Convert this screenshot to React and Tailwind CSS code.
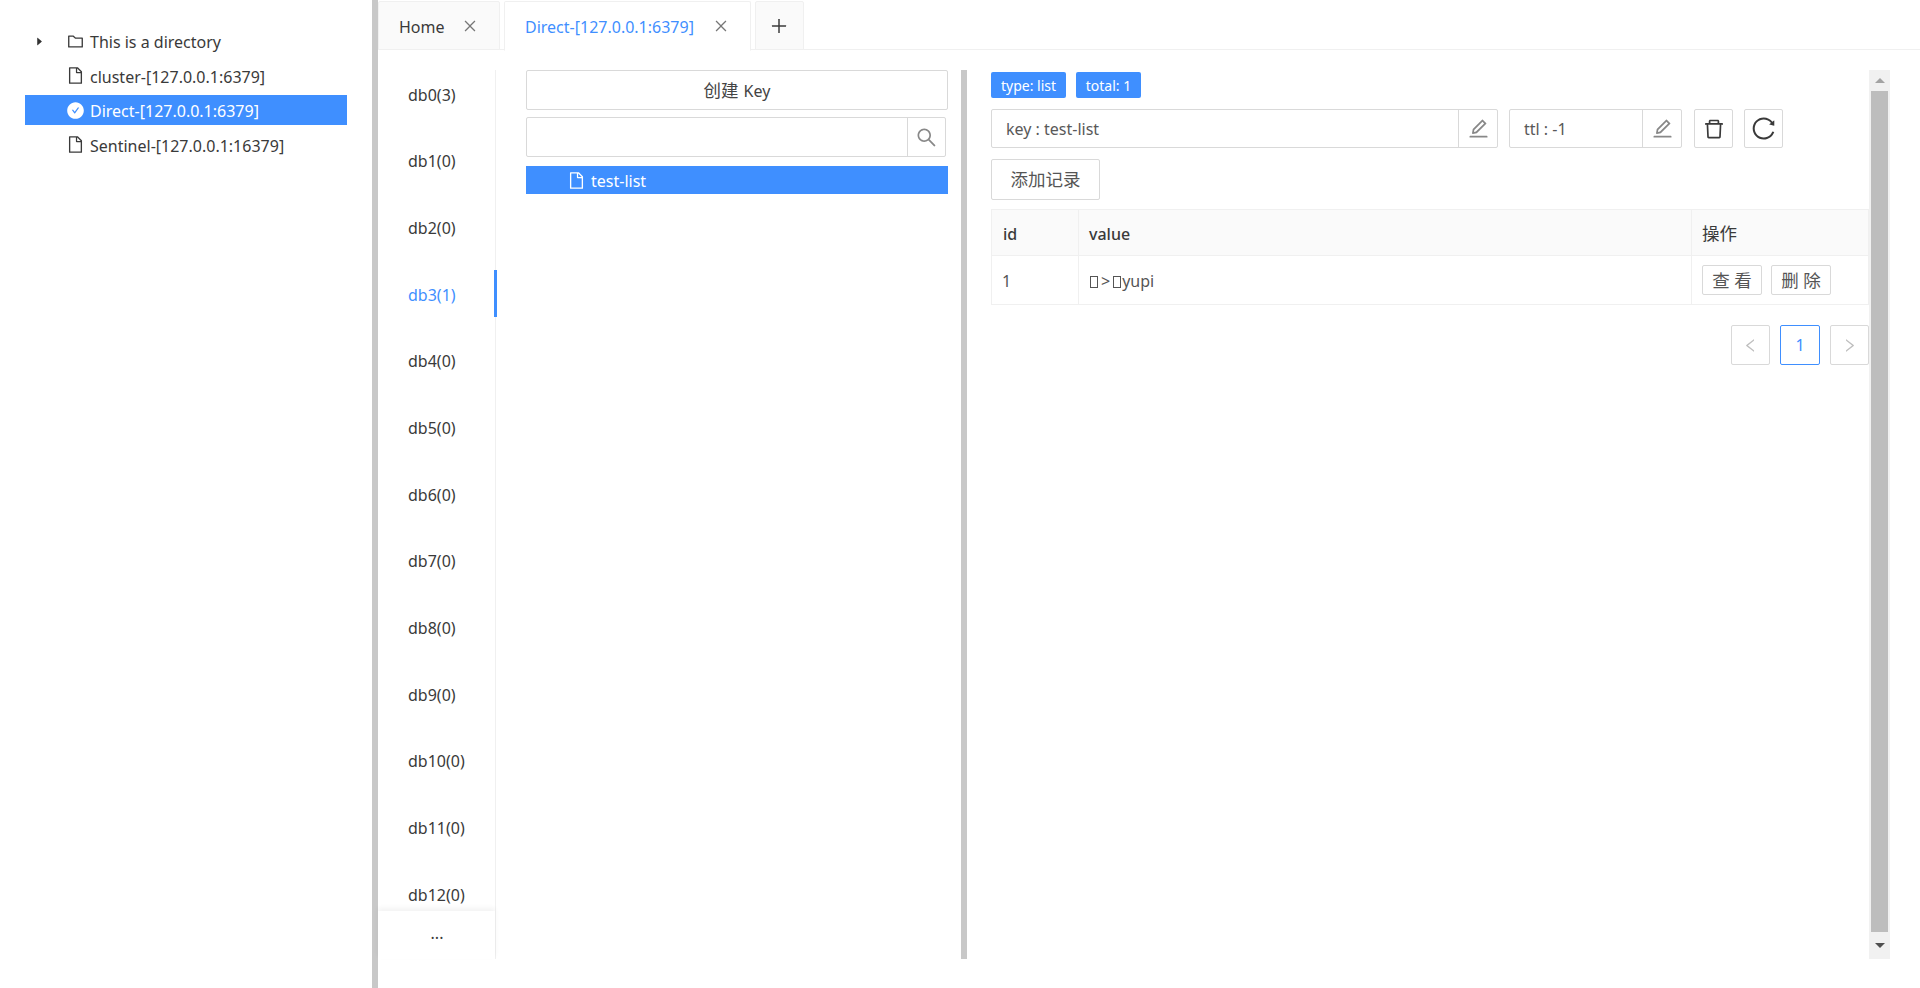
import {
  AiFillCaretRight,
  AiFillCheckCircle,
  AiOutlineClose,
  AiOutlineDelete,
  AiOutlineEdit,
  AiOutlineFile,
  AiOutlineFolder,
  AiOutlineLeft,
  AiOutlinePlus,
  AiOutlineReload,
  AiOutlineRight,
  AiOutlineSearch,
} from "react-icons/ai";

const DATABASES = [3, 0, 0, 1, 0, 0, 0, 0, 0, 0, 0, 0, 0];

function TreeRow({ icon, label, selected, caret }) {
  return (
    <div
      className={`flex h-[30px] w-[322px] items-center ${
        selected ? "bg-[#3f8fff] text-white" : ""
      }`}
    >
      <span className="flex w-[39px] justify-start pl-[9px]">
        {caret && <AiFillCaretRight className="text-[11px] text-[#333]" />}
      </span>
      <span className="flex w-[22px] justify-center text-[19px]">{icon}</span>
      <span className="ml-[4px] mt-[2px] whitespace-nowrap">{label}</span>
    </div>
  );
}

function Tab({ label, active }) {
  return (
    <div
      className={`flex h-[49px] items-center rounded-t-[2px] border border-[#f0f0f0] ${
        active
          ? "relative z-10 mb-[-1px] h-[50px] w-[247px] border-b-white bg-white pl-[20px] text-[#3f8fff]"
          : "w-[122px] bg-[#fafafa] pl-[20px]"
      }`}
    >
      <span className="mt-[2px] whitespace-nowrap">{label}</span>
      <AiOutlineClose
        className={`text-[16px] text-[#777] ${active ? "ml-[19px]" : "ml-[17px]"}`}
      />
    </div>
  );
}

function InputGroup({ width, label }) {
  return (
    <div
      className={`flex h-[39px] items-stretch rounded-[2px] border border-[#d9d9d9] ${width}`}
    >
      <div className="flex flex-1 items-center pl-[14px] text-[#595959]">{label}</div>
      <div className="flex w-[39px] items-center justify-center border-l border-[#d9d9d9] text-[#888]">
        <AiOutlineEdit className="text-[23px]" />
      </div>
    </div>
  );
}

function PageButton({ children, active }) {
  return (
    <div
      className={`flex h-[40px] items-center justify-center rounded-[2px] border ${
        active ? "w-[40px] border-[#3f8fff] text-[#3f8fff]" : "w-[39px] border-[#d9d9d9] text-[#bfbfbf]"
      }`}
    >
      {children}
    </div>
  );
}

// the value holds bytes the font has no glyph for, shown as empty boxes
function MissingGlyph() {
  return <span className="inline-block h-[12px] w-[8px] border border-[#555] align-[-1px]" />;
}

export default function App() {
  return (
    <div className="flex h-[988px] w-[1920px] overflow-hidden bg-white font-['Noto_Sans','Noto_Sans_CJK_SC',sans-serif] text-[16px] text-[#3a3a3a]">
      {/* Connection tree */}
      <aside className="flex w-[372px] shrink-0 flex-col gap-[4.5px] pl-[25px] pt-[26px]">
        <TreeRow caret icon={<AiOutlineFolder />} label="This is a directory" />
        <TreeRow icon={<AiOutlineFile />} label="cluster-[127.0.0.1:6379]" />
        <TreeRow selected icon={<AiFillCheckCircle />} label="Direct-[127.0.0.1:6379]" />
        <TreeRow icon={<AiOutlineFile />} label="Sentinel-[127.0.0.1:16379]" />
      </aside>
      <div className="w-[6px] shrink-0 bg-[#c8c8c8]" />

      <main className="flex min-w-0 flex-1 flex-col">
        {/* Tabs */}
        <div className="flex h-[50px] shrink-0 gap-[4px] border-b border-[#f0f0f0] pr-[30px] pt-[1px]">
          <Tab label="Home" />
          <Tab active label="Direct-[127.0.0.1:6379]" />
          <div className="flex h-[49px] w-[49px] items-center justify-center rounded-t-[2px] border border-[#f0f0f0] bg-[#fafafa] pr-[2px]">
            <AiOutlinePlus className="text-[20px]" />
          </div>
        </div>

        <div className="flex min-h-0 flex-1 pb-[29px] pr-[30px] pt-[20px]">
          {/* Database menu */}
          <nav className="flex w-[118px] shrink-0 flex-col border-r border-[#f0f0f0]">
            <div className="h-[841px] overflow-x-visible overflow-y-clip">
              {DATABASES.map((count, i) => (
                <div
                  key={i}
                  className={`mb-[19.7px] flex h-[47px] items-center pl-[30px] pt-[2px] ${
                    i === 3
                      ? "mr-[-2px] border-r-[3px] border-[#3f8fff] text-[#3f8fff]"
                      : ""
                  }`}
                >
                  db{i}({count})
                </div>
              ))}
            </div>
            <div className="flex flex-1 items-center justify-center pb-[5px] pl-[1px] shadow-[0_-3px_5px_rgba(0,0,0,0.05)]">
              ...
            </div>
          </nav>

          {/* Key list */}
          <section className="ml-[30px] w-[422px] shrink-0">
            <div className="flex h-[40px] items-center justify-center rounded-[2px] border border-[#d9d9d9] pt-[1px] text-[#444]">
              <span className="text-[17.5px]">创建</span>
              <span className="ml-[5px]">Key</span>
            </div>
            <div className="mt-[7px] flex h-[40px] w-[420px] rounded-[2px] border border-[#d9d9d9]">
              <div className="flex-1" />
              <div className="flex w-[38px] items-center justify-center border-l border-[#d9d9d9] text-[#888]">
                <AiOutlineSearch className="text-[23px]" />
              </div>
            </div>
            <div className="mt-[9px] flex h-[28px] items-center bg-[#3f8fff] pl-[41px] text-white">
              <AiOutlineFile className="text-[19px]" />
              <span className="ml-[5px] mt-[1px]">test-list</span>
            </div>
          </section>

          <div className="ml-[13px] w-[6px] shrink-0 bg-[#c8c8c8]" />

          {/* Key detail */}
          <section className="ml-[24px] flex w-[878px] shrink-0 flex-col">
            <div className="mt-[2px] flex gap-[10px] text-[14px] text-white">
              <span className="flex h-[26px] w-[75px] items-center justify-center rounded-[2px] bg-[#3f8fff]">
                type: list
              </span>
              <span className="flex h-[26px] w-[65px] items-center justify-center rounded-[2px] bg-[#3f8fff]">
                total: 1
              </span>
            </div>
            <div className="mt-[11px] flex items-center">
              <InputGroup width="w-[507px]" label="key : test-list" />
              <div className="ml-[11px]">
                <InputGroup width="w-[173px]" label="ttl : -1" />
              </div>
              <div className="ml-[12px] flex h-[39px] w-[39px] items-center justify-center rounded-[2px] border border-[#d9d9d9]">
                <AiOutlineDelete className="text-[24px]" />
              </div>
              <div className="ml-[11px] flex h-[39px] w-[39px] items-center justify-center rounded-[2px] border border-[#d9d9d9]">
                <AiOutlineReload className="text-[27px]" />
              </div>
            </div>
            <div className="mt-[11px] flex h-[41px] w-[109px] items-center justify-center rounded-[2px] border border-[#d9d9d9] text-[17.5px] text-[#555]">
              添加记录
            </div>

            <table className="mt-[9px] w-full table-fixed border-collapse">
              <thead>
                <tr className="h-[46px] bg-[#fafafa] text-left font-medium">
                  <th className="w-[87px] border border-[#f0f0f0] pl-[11px] pt-[2px] font-medium">id</th>
                  <th className="w-[613px] border border-[#f0f0f0] pl-[10px] pt-[2px] font-medium">value</th>
                  <th className="border border-[#f0f0f0] pl-[10px] pt-[2px] text-[17.5px] font-normal">操作</th>
                </tr>
              </thead>
              <tbody>
                <tr className="h-[49px] text-[#555]">
                  <td className="border border-[#f0f0f0] pl-[10px] pt-[1px]">1</td>
                  <td className="border border-[#f0f0f0] pl-[11px] pt-[1px]">
                    <MissingGlyph />
                    <span className="mx-[3px]">&gt;</span>
                    <MissingGlyph />
                    <span className="ml-[1px]">yupi</span>
                  </td>
                  <td className="border border-[#f0f0f0] pl-[10px]">
                    <div className="flex gap-[9px]">
                      <span className="flex h-[30px] w-[60px] items-center justify-center rounded-[2px] border border-[#d9d9d9] text-[17.5px]">
                        查 看
                      </span>
                      <span className="flex h-[30px] w-[60px] items-center justify-center rounded-[2px] border border-[#d9d9d9] text-[17.5px]">
                        删 除
                      </span>
                    </div>
                  </td>
                </tr>
              </tbody>
            </table>

            <div className="mt-[20px] flex justify-end gap-[10px]">
              <PageButton>
                <AiOutlineLeft className="text-[17px]" />
              </PageButton>
              <PageButton active>1</PageButton>
              <PageButton>
                <AiOutlineRight className="text-[17px]" />
              </PageButton>
            </div>
          </section>

          {/* Scrollbar */}
          <div className="flex w-[21px] shrink-0 flex-col items-center bg-[#f1f1f1]">
            <div className="flex h-[21px] items-center justify-center">
              <div className="h-0 w-0 border-x-[5px] border-b-[5px] border-x-transparent border-b-[#a3a3a3]" />
            </div>
            <div className="w-[17px] flex-1 bg-[#bdbdbd]" />
            <div className="flex h-[27px] items-center justify-center">
              <div className="h-0 w-0 border-x-[5px] border-t-[5px] border-x-transparent border-t-[#505050]" />
            </div>
          </div>
        </div>
      </main>
    </div>
  );
}
